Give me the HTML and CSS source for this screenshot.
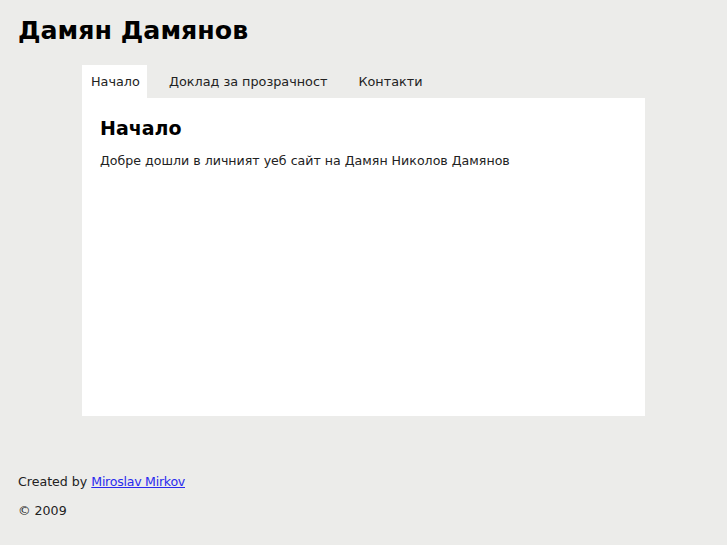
FILE: index.html
```html
<!DOCTYPE html>
<html lang="bg">
<head>
<meta charset="utf-8">
<title>Дамян Дамянов</title>
<link rel="stylesheet" href="styles.css">
</head>
<body>
<header class="site-header">
  <h1 class="site-title">Дамян Дамянов</h1>
</header>
<div class="wrap">
  <nav class="tabs">
    <a class="tab active" href="#">Начало</a>
    <a class="tab" href="#">Доклад за прозрачност</a>
    <a class="tab" href="#">Контакти</a>
  </nav>
  <main class="content">
    <h2 class="page-title">Начало</h2>
    <p class="intro">Добре дошли в личният уеб сайт на Дамян Николов Дамянов</p>
  </main>
</div>
<footer class="site-footer">
  <p class="credit">Created by <a href="#">Miroslav Mirkov</a></p>
  <p class="copy">© 2009</p>
</footer>
</body>
</html>
```

FILE: styles.css
```css
html, body {
  margin: 0;
  padding: 0;
  background: #ececea;
  color: #222;
  font-family: "DejaVu Sans", sans-serif;
  font-size: 12.6px;
}
.site-header {
  padding: 14px 18px 0;
}
.site-title {
  margin: 0;
  font-size: 25.3px;
  line-height: 34px;
  font-weight: bold;
  color: #000;
}
.wrap {
  width: 563px;
  margin: 17px auto 0;
}
.tabs {
  display: flex;
  height: 33px;
}
.tab {
  display: flex;
  align-items: center;
  padding: 0 9px;
  margin-right: 13px;
  color: #222;
  text-decoration: none;
  font-size: 12.8px;
}
.tab.active {
  background: #fff;
  padding-right: 7px;
}
.content {
  background: #fff;
  height: 318px;
  padding: 18px 18px 0;
  box-sizing: border-box;
}
.page-title {
  margin: 0;
  font-size: 19px;
  line-height: 24px;
  font-weight: bold;
  color: #000;
}
.intro {
  margin: 13px 0 0;
  line-height: 16px;
}
.site-footer {
  padding: 58px 18px 0;
}
.site-footer p {
  margin: 0 0 13px;
  line-height: 16px;
}
.site-footer a {
  color: #2a2aee;
  letter-spacing: -0.27px;
}
```
